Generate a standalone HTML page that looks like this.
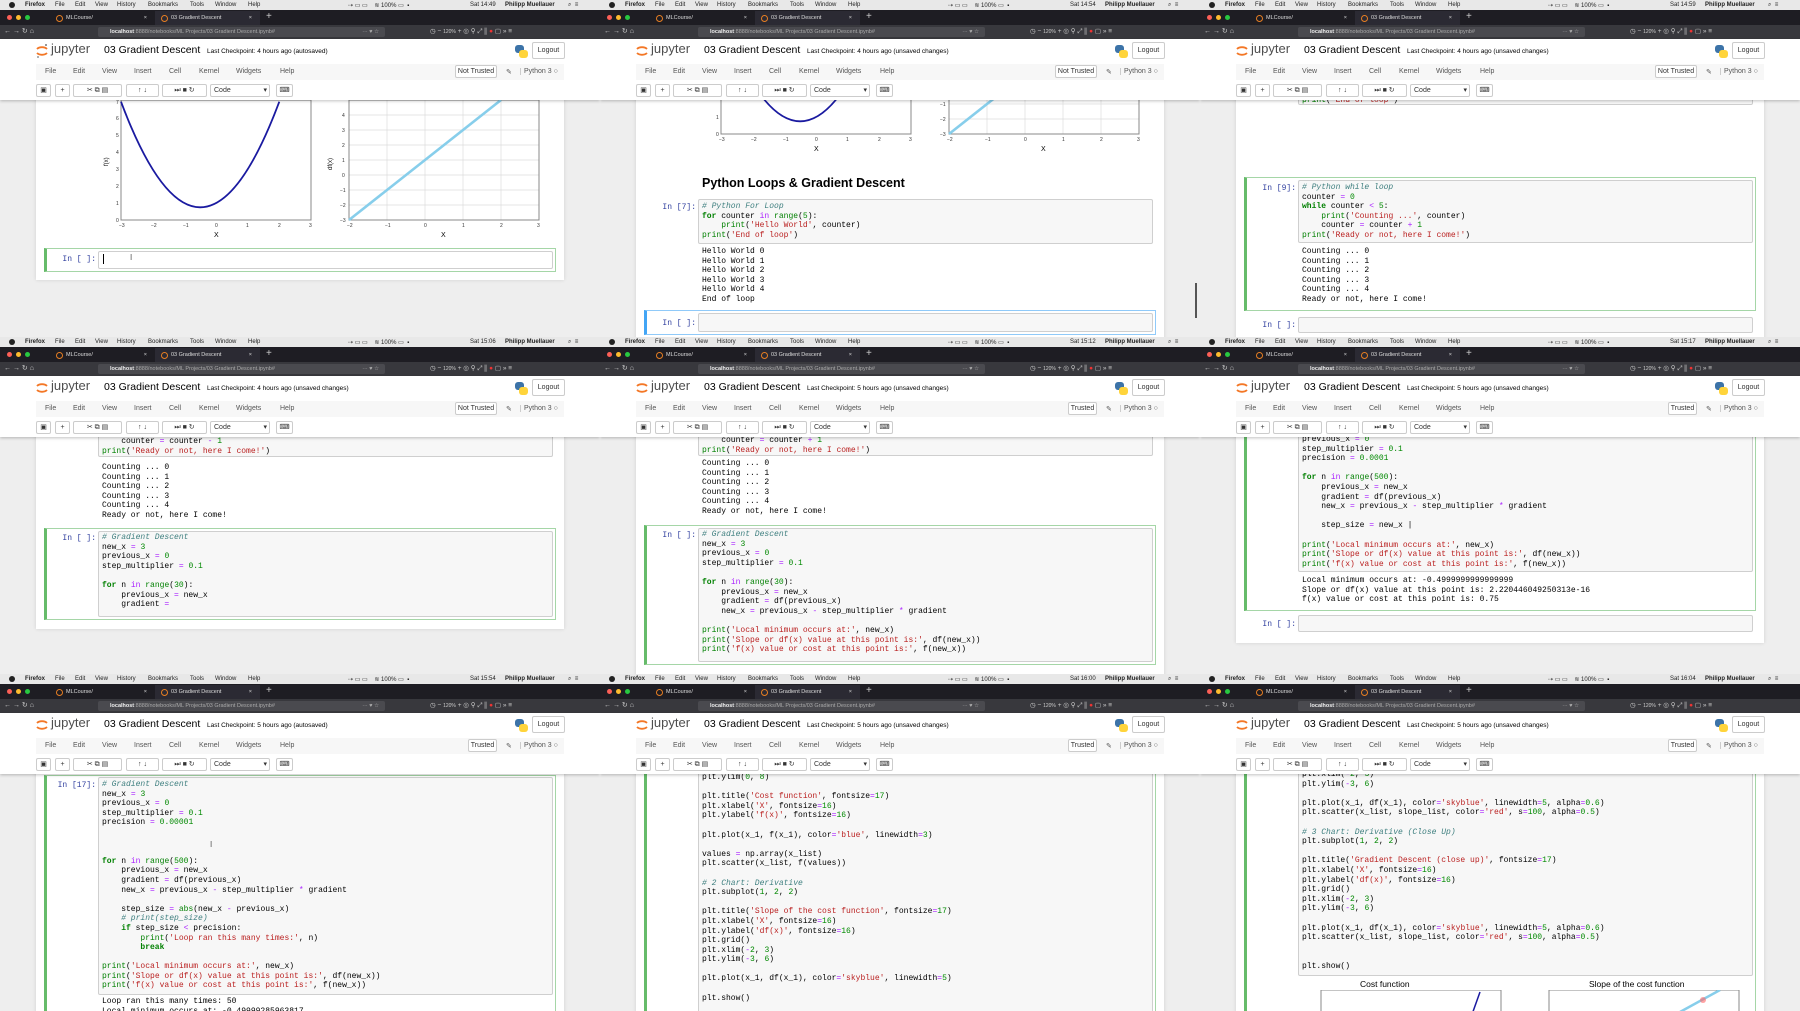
<!DOCTYPE html>
<html><head><meta charset="utf-8">
<style>
*{box-sizing:border-box}
body{margin:0;width:1800px;height:1011px;position:relative;overflow:hidden;background:#eee;font-family:"Liberation Sans",sans-serif}
.p{position:absolute;width:600px;height:337px;overflow:hidden;background:#eeeeee}
.mb{position:absolute;top:0;left:0;width:600px;height:10px;background:#e8e8e8;font-size:6px;color:#222}
.mb i,.ub i,.jh i{position:absolute;font-style:normal;white-space:nowrap}
.mb i{top:1.5px}
.ap{position:absolute;left:9px;top:2px;width:6px;height:6px;border-radius:50%;background:#222}
.tb{position:absolute;top:10px;left:0;width:600px;height:15px;background:#1e1d23}
.dot{position:absolute;top:5px;width:5px;height:5px;border-radius:50%}
.tab{position:absolute;top:1px;height:14px;font-size:5.5px;color:#ddd;padding:4px 0 0 16px;white-space:nowrap}
.tab:before{content:"";position:absolute;left:6px;top:4px;width:5px;height:5px;border:1px solid #e67e22;border-radius:50%}
.ub{position:absolute;top:25px;left:0;width:600px;height:14px;background:#38383d;color:#ccc;font-size:7px}
.uf{position:absolute;left:98px;top:2px;width:287px;height:10px;background:#4a4a4f;border-radius:2px;font-size:5.5px;color:#aaa;padding:2px 0 0 12px;white-space:nowrap}
.uf b{color:#eee}
.jh{position:absolute;top:39px;left:0;width:600px;height:61px;background:#fff;box-shadow:0 1px 3px rgba(0,0,0,.25);z-index:2}
.mn{position:absolute;left:36px;top:25px;width:528px;height:16px;background:#f7f7f7;font-size:7px;color:#555}
.mn i{top:4px}
.bt{position:absolute;top:45px;height:13px;border:1px solid #ccc;background:#fff;border-radius:2px;font-size:7px;text-align:center;color:#333;line-height:11px}
.nb{position:absolute;top:100px;left:0;width:600px;height:237px;overflow:hidden}
.ct{position:absolute;left:36px;width:528px;background:#fff;box-shadow:0 0 4px rgba(0,0,0,.12)}
.cg{position:absolute;left:44px;width:512px;border:1px solid #a5d6a7;border-left:3px solid #66bb6a}
.cb{position:absolute;left:44px;width:512px;border:1px solid #90caf9;border-left:3px solid #42a5f5}
.ia{position:absolute;left:98px;width:455px;background:#f7f7f7;border:1px solid #cfcfcf;border-radius:2px}
.pr{position:absolute;left:40px;width:56px;text-align:right;font:8px "Liberation Mono",monospace;color:#303f9f;white-space:pre}
pre{position:absolute;left:102px;margin:0;font:8px/9.6px "Liberation Mono",monospace;color:#000;white-space:pre}
.k{color:#008000;font-weight:bold}.s{color:#ba2121}.n{color:#080}.c{color:#408080;font-style:italic}.o{color:#aa22ff}.b{color:#008000}
svg text{font-family:"Liberation Sans",sans-serif}
</style></head><body>

<!-- ============ PANEL 1 ============ -->
<div class="p" style="left:0;top:0">
<div class="mb"><b class="ap"></b><i style="left:25px"><b>Firefox</b></i><i style="left:55px">File</i><i style="left:75px">Edit</i><i style="left:95px">View</i><i style="left:117px">History</i><i style="left:148px">Bookmarks</i><i style="left:190px">Tools</i><i style="left:215px">Window</i><i style="left:248px">Help</i><i style="left:348px">⇢ ▭ ▭ &nbsp;&nbsp; ≋ 100% ▭ &nbsp;▪</i><i style="left:470px">Sat 14:49</i><i style="left:505px"><b>Philipp Muellauer</b></i><i style="left:568px">⌕ &nbsp;≡</i></div>
<div class="tb"><b class="dot" style="left:7px;background:#fc5f57"></b><b class="dot" style="left:16px;background:#fdbc2e"></b><b class="dot" style="left:25px;background:#28c840"></b><div class="tab" style="left:50px;width:105px">MLCourse/<span style="position:absolute;right:8px">×</span></div><div class="tab" style="left:155px;width:105px;background:#2b2a33">03 Gradient Descent<span style="position:absolute;right:8px">×</span></div><i style="position:absolute;left:266px;top:1px;color:#ccc;font-size:10px;font-style:normal">+</i></div>
<div class="ub"><i style="left:4px;top:2px">← → ↻ ⌂</i><div class="uf"><b>localhost</b>:8888/notebooks/ML Projects/03 Gradient Descent.ipynb#<span style="position:absolute;right:6px">··· ♥ ☆</span></div><i style="left:430px;top:2px;font-size:6.5px">◷ − <span style="font-size:5px">120%</span> + ◎ ⚲ ⤢ ⫼ <span style="color:#e33">●</span> ▢ » ≡</i></div>
<div class="jh"><svg style="position:absolute;left:35px;top:4px" width="14" height="16"><path d="M2 6 A6 4 0 0 1 12 6" stroke="#f37726" stroke-width="1.8" fill="none"/><path d="M2 10 A6 4 0 0 0 12 10" stroke="#f37726" stroke-width="1.8" fill="none"/><circle cx="11" cy="2" r="1" fill="#767677"/><circle cx="3" cy="14" r="1" fill="#989798"/></svg><i style="left:51px;top:2px;font-size:13px;color:#4e4e4e">jupyter</i><i style="left:104px;top:5px;font-size:10.5px;color:#000">03 Gradient Descent</i><i style="left:207px;top:9px;font-size:6.5px;color:#000">Last Checkpoint: 4 hours ago (autosaved)</i><svg style="position:absolute;left:514px;top:5px" width="15" height="15"><rect x="1" y="1" width="9" height="8" rx="3" fill="#3c73a8"/><rect x="5" y="6" width="9" height="8" rx="3" fill="#ffd43b"/></svg><div class="bt" style="left:532px;top:3px;width:33px;height:17px;line-height:15px">Logout</div>
<div class="mn"><i style="left:9px">File</i><i style="left:37px">Edit</i><i style="left:66px">View</i><i style="left:98px">Insert</i><i style="left:133px">Cell</i><i style="left:163px">Kernel</i><i style="left:200px">Widgets</i><i style="left:244px">Help</i><div class="bt" style="left:419px;top:1px;width:42px">Not Trusted</div><i style="left:470px">✎</i><i style="left:484px;border-left:1px solid #ccc;padding-left:3px">Python 3 ○</i></div>
<div class="bt" style="left:36px;width:15px">▣</div><div class="bt" style="left:55px;width:15px">+</div><div class="bt" style="left:73px;width:49px">✂ ⧉ ▤</div><div class="bt" style="left:126px;width:33px">↑ ↓</div><div class="bt" style="left:162px;width:45px">⏭ ■ ↻</div><div class="bt" style="left:210px;width:60px;text-align:left;padding-left:3px">Code<span style="position:absolute;right:2px">▾</span></div><div class="bt" style="left:276px;width:17px">⌨</div>
</div>
<div class="nb">
<div class="ct" style="top:-10px;height:190px"></div>
<svg style="position:absolute;left:0;top:0" width="600" height="140">
<rect x="121" y="0" width="190" height="120" fill="none" stroke="#888" stroke-width="1"/>
<path d="M121 1.7 Q200.2 212.9 279.3 1.7" stroke="#1a1aa0" stroke-width="1.8" fill="none"/>
<g font-size="5" fill="#333"><text x="116" y="122">0</text><text x="116" y="105">1</text><text x="116" y="88">2</text><text x="116" y="71">3</text><text x="116" y="54">4</text><text x="116" y="37">5</text><text x="116" y="20">6</text><text x="116" y="4">7</text>
<text x="119" y="127">−3</text><text x="151" y="127">−2</text><text x="183" y="127">−1</text><text x="215" y="127">0</text><text x="246" y="127">1</text><text x="278" y="127">2</text><text x="309" y="127">3</text></g>
<text x="214" y="137" font-size="7">X</text><text transform="translate(108,66) rotate(-90)" font-size="6">f(x)</text>
<g stroke="#ddd" stroke-width="0.7"><line x1="387" y1="0" x2="387" y2="120"/><line x1="425" y1="0" x2="425" y2="120"/><line x1="463" y1="0" x2="463" y2="120"/><line x1="501" y1="0" x2="501" y2="120"/>
<line x1="349" y1="15" x2="539" y2="15"/><line x1="349" y1="30" x2="539" y2="30"/><line x1="349" y1="45" x2="539" y2="45"/><line x1="349" y1="60" x2="539" y2="60"/><line x1="349" y1="75" x2="539" y2="75"/><line x1="349" y1="90" x2="539" y2="90"/><line x1="349" y1="105" x2="539" y2="105"/></g>
<rect x="349" y="0" width="190" height="120" fill="none" stroke="#888" stroke-width="1"/>
<line x1="349" y1="120" x2="501" y2="0" stroke="#87ceeb" stroke-width="2.6"/>
<g font-size="5" fill="#333"><text x="342" y="17">4</text><text x="342" y="32">3</text><text x="342" y="47">2</text><text x="342" y="62">1</text><text x="342" y="77">0</text><text x="340" y="92">−1</text><text x="340" y="107">−2</text><text x="340" y="122">−3</text>
<text x="347" y="127">−2</text><text x="385" y="127">−1</text><text x="424" y="127">0</text><text x="462" y="127">1</text><text x="500" y="127">2</text><text x="537" y="127">3</text></g>
<text x="441" y="137" font-size="7">X</text><text transform="translate(332,70) rotate(-90)" font-size="6">df(x)</text>
</svg>
<div class="cg" style="top:148px;height:24px"></div><div class="ia" style="top:151px;height:18px;background:#fff"></div><div class="pr" style="top:155px">In [ ]:</div><div style="position:absolute;left:103px;top:154px;width:1px;height:10px;background:#000"></div><div style="position:absolute;left:130px;top:153px;font-size:8px;color:#555">I</div>
</div>
</div>

<!-- ============ PANEL 2 ============ -->
<div class="p" style="left:600px;top:0">
<div class="mb"><b class="ap"></b><i style="left:25px"><b>Firefox</b></i><i style="left:55px">File</i><i style="left:75px">Edit</i><i style="left:95px">View</i><i style="left:117px">History</i><i style="left:148px">Bookmarks</i><i style="left:190px">Tools</i><i style="left:215px">Window</i><i style="left:248px">Help</i><i style="left:348px">⇢ ▭ ▭ &nbsp;&nbsp; ≋ 100% ▭ &nbsp;▪</i><i style="left:470px">Sat 14:54</i><i style="left:505px"><b>Philipp Muellauer</b></i><i style="left:568px">⌕ &nbsp;≡</i></div>
<div class="tb"><b class="dot" style="left:7px;background:#fc5f57"></b><b class="dot" style="left:16px;background:#fdbc2e"></b><b class="dot" style="left:25px;background:#28c840"></b><div class="tab" style="left:50px;width:105px">MLCourse/<span style="position:absolute;right:8px">×</span></div><div class="tab" style="left:155px;width:105px;background:#2b2a33">03 Gradient Descent<span style="position:absolute;right:8px">×</span></div><i style="position:absolute;left:266px;top:1px;color:#ccc;font-size:10px;font-style:normal">+</i></div>
<div class="ub"><i style="left:4px;top:2px">← → ↻ ⌂</i><div class="uf"><b>localhost</b>:8888/notebooks/ML Projects/03 Gradient Descent.ipynb#<span style="position:absolute;right:6px">··· ♥ ☆</span></div><i style="left:430px;top:2px;font-size:6.5px">◷ − <span style="font-size:5px">120%</span> + ◎ ⚲ ⤢ ⫼ <span style="color:#e33">●</span> ▢ » ≡</i></div>
<div class="jh"><svg style="position:absolute;left:35px;top:4px" width="14" height="16"><path d="M2 6 A6 4 0 0 1 12 6" stroke="#f37726" stroke-width="1.8" fill="none"/><path d="M2 10 A6 4 0 0 0 12 10" stroke="#f37726" stroke-width="1.8" fill="none"/></svg><i style="left:51px;top:2px;font-size:13px;color:#4e4e4e">jupyter</i><i style="left:104px;top:5px;font-size:10.5px;color:#000">03 Gradient Descent</i><i style="left:207px;top:9px;font-size:6.5px;color:#000">Last Checkpoint: 4 hours ago (unsaved changes)</i><svg style="position:absolute;left:514px;top:5px" width="15" height="15"><rect x="1" y="1" width="9" height="8" rx="3" fill="#3c73a8"/><rect x="5" y="6" width="9" height="8" rx="3" fill="#ffd43b"/></svg><div class="bt" style="left:532px;top:3px;width:33px;height:17px;line-height:15px">Logout</div>
<div class="mn"><i style="left:9px">File</i><i style="left:37px">Edit</i><i style="left:66px">View</i><i style="left:98px">Insert</i><i style="left:133px">Cell</i><i style="left:163px">Kernel</i><i style="left:200px">Widgets</i><i style="left:244px">Help</i><div class="bt" style="left:419px;top:1px;width:42px">Not Trusted</div><i style="left:470px">✎</i><i style="left:484px;border-left:1px solid #ccc;padding-left:3px">Python 3 ○</i></div>
<div class="bt" style="left:36px;width:15px">▣</div><div class="bt" style="left:55px;width:15px">+</div><div class="bt" style="left:73px;width:49px">✂ ⧉ ▤</div><div class="bt" style="left:126px;width:33px">↑ ↓</div><div class="bt" style="left:162px;width:45px">⏭ ■ ↻</div><div class="bt" style="left:210px;width:60px;text-align:left;padding-left:3px">Code<span style="position:absolute;right:2px">▾</span></div><div class="bt" style="left:276px;width:17px">⌨</div>
</div>
<div class="nb">
<div class="ct" style="top:-10px;height:260px"></div>
<svg style="position:absolute;left:0;top:-86px" width="600" height="140">
<rect x="121" y="0" width="190" height="120" fill="none" stroke="#888" stroke-width="1"/>
<path d="M121 1.7 Q200.2 212.9 279.3 1.7" stroke="#1a1aa0" stroke-width="1.8" fill="none"/>
<g font-size="5" fill="#333"><text x="116" y="122">0</text><text x="116" y="105">1</text><text x="119" y="127">−3</text><text x="151" y="127">−2</text><text x="183" y="127">−1</text><text x="215" y="127">0</text><text x="246" y="127">1</text><text x="278" y="127">2</text><text x="309" y="127">3</text></g>
<text x="214" y="137" font-size="7">X</text>
<g stroke="#ddd" stroke-width="0.7"><line x1="387" y1="0" x2="387" y2="120"/><line x1="425" y1="0" x2="425" y2="120"/><line x1="463" y1="0" x2="463" y2="120"/><line x1="501" y1="0" x2="501" y2="120"/><line x1="349" y1="90" x2="539" y2="90"/><line x1="349" y1="105" x2="539" y2="105"/></g>
<rect x="349" y="0" width="190" height="120" fill="none" stroke="#888" stroke-width="1"/>
<line x1="349" y1="120" x2="501" y2="0" stroke="#87ceeb" stroke-width="2.6"/>
<g font-size="5" fill="#333"><text x="340" y="92">−1</text><text x="340" y="107">−2</text><text x="340" y="122">−3</text><text x="347" y="127">−2</text><text x="385" y="127">−1</text><text x="424" y="127">0</text><text x="462" y="127">1</text><text x="500" y="127">2</text><text x="537" y="127">3</text></g>
<text x="441" y="137" font-size="7">X</text>
</svg>
<div style="position:absolute;left:102px;top:76px;font-size:12.5px;font-weight:bold;color:#000">Python Loops &amp; Gradient Descent</div>
<div class="ia" style="top:99px;height:45px"></div><div class="pr" style="top:103px">In [7]:</div>
<pre style="top:102px"><span class="c"># Python For Loop</span>
<span class="k">for</span> counter <span class="o">in</span> <span class="b">range</span>(<span class="n">5</span>):
    <span class="b">print</span>(<span class="s">'Hello World'</span>, counter)
<span class="b">print</span>(<span class="s">'End of loop'</span>)</pre>
<pre style="top:147px">Hello World 0
Hello World 1
Hello World 2
Hello World 3
Hello World 4
End of loop</pre>
<div class="cb" style="top:210px;height:25px"></div><div class="ia" style="top:213px;height:19px"></div><div class="pr" style="top:219px">In [ ]:</div>
</div>
<div style="position:absolute;left:595px;top:283px;width:2px;height:35px;background:#555"></div>
</div>

<!-- ============ PANEL 3 ============ -->
<div class="p" style="left:1200px;top:0">
<div class="mb"><b class="ap"></b><i style="left:25px"><b>Firefox</b></i><i style="left:55px">File</i><i style="left:75px">Edit</i><i style="left:95px">View</i><i style="left:117px">History</i><i style="left:148px">Bookmarks</i><i style="left:190px">Tools</i><i style="left:215px">Window</i><i style="left:248px">Help</i><i style="left:348px">⇢ ▭ ▭ &nbsp;&nbsp; ≋ 100% ▭ &nbsp;▪</i><i style="left:470px">Sat 14:59</i><i style="left:505px"><b>Philipp Muellauer</b></i><i style="left:568px">⌕ &nbsp;≡</i></div>
<div class="tb"><b class="dot" style="left:7px;background:#fc5f57"></b><b class="dot" style="left:16px;background:#fdbc2e"></b><b class="dot" style="left:25px;background:#28c840"></b><div class="tab" style="left:50px;width:105px">MLCourse/<span style="position:absolute;right:8px">×</span></div><div class="tab" style="left:155px;width:105px;background:#2b2a33">03 Gradient Descent<span style="position:absolute;right:8px">×</span></div><i style="position:absolute;left:266px;top:1px;color:#ccc;font-size:10px;font-style:normal">+</i></div>
<div class="ub"><i style="left:4px;top:2px">← → ↻ ⌂</i><div class="uf"><b>localhost</b>:8888/notebooks/ML Projects/03 Gradient Descent.ipynb#<span style="position:absolute;right:6px">··· ♥ ☆</span></div><i style="left:430px;top:2px;font-size:6.5px">◷ − <span style="font-size:5px">120%</span> + ◎ ⚲ ⤢ ⫼ <span style="color:#e33">●</span> ▢ » ≡</i></div>
<div class="jh"><svg style="position:absolute;left:35px;top:4px" width="14" height="16"><path d="M2 6 A6 4 0 0 1 12 6" stroke="#f37726" stroke-width="1.8" fill="none"/><path d="M2 10 A6 4 0 0 0 12 10" stroke="#f37726" stroke-width="1.8" fill="none"/></svg><i style="left:51px;top:2px;font-size:13px;color:#4e4e4e">jupyter</i><i style="left:104px;top:5px;font-size:10.5px;color:#000">03 Gradient Descent</i><i style="left:207px;top:9px;font-size:6.5px;color:#000">Last Checkpoint: 4 hours ago (unsaved changes)</i><svg style="position:absolute;left:514px;top:5px" width="15" height="15"><rect x="1" y="1" width="9" height="8" rx="3" fill="#3c73a8"/><rect x="5" y="6" width="9" height="8" rx="3" fill="#ffd43b"/></svg><div class="bt" style="left:532px;top:3px;width:33px;height:17px;line-height:15px">Logout</div>
<div class="mn"><i style="left:9px">File</i><i style="left:37px">Edit</i><i style="left:66px">View</i><i style="left:98px">Insert</i><i style="left:133px">Cell</i><i style="left:163px">Kernel</i><i style="left:200px">Widgets</i><i style="left:244px">Help</i><div class="bt" style="left:419px;top:1px;width:42px">Not Trusted</div><i style="left:470px">✎</i><i style="left:484px;border-left:1px solid #ccc;padding-left:3px">Python 3 ○</i></div>
<div class="bt" style="left:36px;width:15px">▣</div><div class="bt" style="left:55px;width:15px">+</div><div class="bt" style="left:73px;width:49px">✂ ⧉ ▤</div><div class="bt" style="left:126px;width:33px">↑ ↓</div><div class="bt" style="left:162px;width:45px">⏭ ■ ↻</div><div class="bt" style="left:210px;width:60px;text-align:left;padding-left:3px">Code<span style="position:absolute;right:2px">▾</span></div><div class="bt" style="left:276px;width:17px">⌨</div>
</div>
<div class="nb">
<div class="ct" style="top:-10px;height:260px"></div>
<div class="ia" style="top:-10px;height:15px"></div>
<pre style="top:-4px"><span class="b">print</span>(<span class="s">'End of loop'</span>)</pre>
<div class="cg" style="top:77px;height:134px"></div><div class="ia" style="top:80px;height:63px"></div><div class="pr" style="top:84px">In [9]:</div>
<pre style="top:83px"><span class="c"># Python while loop</span>
counter <span class="o">=</span> <span class="n">0</span>
<span class="k">while</span> counter <span class="o">&lt;</span> <span class="n">5</span>:
    <span class="b">print</span>(<span class="s">'Counting ...'</span>, counter)
    counter <span class="o">=</span> counter <span class="o">+</span> <span class="n">1</span>
<span class="b">print</span>(<span class="s">'Ready or not, here I come!'</span>)</pre>
<pre style="top:147px">Counting ... 0
Counting ... 1
Counting ... 2
Counting ... 3
Counting ... 4
Ready or not, here I come!</pre>
<div class="ia" style="top:217px;height:16px"></div><div class="pr" style="top:221px">In [ ]:</div>
</div>
</div>

<!-- ============ PANEL 4 ============ -->
<div class="p" style="left:0;top:337px">
<div class="mb"><b class="ap"></b><i style="left:25px"><b>Firefox</b></i><i style="left:55px">File</i><i style="left:75px">Edit</i><i style="left:95px">View</i><i style="left:117px">History</i><i style="left:148px">Bookmarks</i><i style="left:190px">Tools</i><i style="left:215px">Window</i><i style="left:248px">Help</i><i style="left:348px">⇢ ▭ ▭ &nbsp;&nbsp; ≋ 100% ▭ &nbsp;▪</i><i style="left:470px">Sat 15:06</i><i style="left:505px"><b>Philipp Muellauer</b></i><i style="left:568px">⌕ &nbsp;≡</i></div>
<div class="tb"><b class="dot" style="left:7px;background:#fc5f57"></b><b class="dot" style="left:16px;background:#fdbc2e"></b><b class="dot" style="left:25px;background:#28c840"></b><div class="tab" style="left:50px;width:105px">MLCourse/<span style="position:absolute;right:8px">×</span></div><div class="tab" style="left:155px;width:105px;background:#2b2a33">03 Gradient Descent<span style="position:absolute;right:8px">×</span></div><i style="position:absolute;left:266px;top:1px;color:#ccc;font-size:10px;font-style:normal">+</i></div>
<div class="ub"><i style="left:4px;top:2px">← → ↻ ⌂</i><div class="uf"><b>localhost</b>:8888/notebooks/ML Projects/03 Gradient Descent.ipynb#<span style="position:absolute;right:6px">··· ♥ ☆</span></div><i style="left:430px;top:2px;font-size:6.5px">◷ − <span style="font-size:5px">120%</span> + ◎ ⚲ ⤢ ⫼ <span style="color:#e33">●</span> ▢ » ≡</i></div>
<div class="jh"><svg style="position:absolute;left:35px;top:4px" width="14" height="16"><path d="M2 6 A6 4 0 0 1 12 6" stroke="#f37726" stroke-width="1.8" fill="none"/><path d="M2 10 A6 4 0 0 0 12 10" stroke="#f37726" stroke-width="1.8" fill="none"/></svg><i style="left:51px;top:2px;font-size:13px;color:#4e4e4e">jupyter</i><i style="left:104px;top:5px;font-size:10.5px;color:#000">03 Gradient Descent</i><i style="left:207px;top:9px;font-size:6.5px;color:#000">Last Checkpoint: 4 hours ago (unsaved changes)</i><svg style="position:absolute;left:514px;top:5px" width="15" height="15"><rect x="1" y="1" width="9" height="8" rx="3" fill="#3c73a8"/><rect x="5" y="6" width="9" height="8" rx="3" fill="#ffd43b"/></svg><div class="bt" style="left:532px;top:3px;width:33px;height:17px;line-height:15px">Logout</div>
<div class="mn"><i style="left:9px">File</i><i style="left:37px">Edit</i><i style="left:66px">View</i><i style="left:98px">Insert</i><i style="left:133px">Cell</i><i style="left:163px">Kernel</i><i style="left:200px">Widgets</i><i style="left:244px">Help</i><div class="bt" style="left:419px;top:1px;width:42px">Not Trusted</div><i style="left:470px">✎</i><i style="left:484px;border-left:1px solid #ccc;padding-left:3px">Python 3 ○</i></div>
<div class="bt" style="left:36px;width:15px">▣</div><div class="bt" style="left:55px;width:15px">+</div><div class="bt" style="left:73px;width:49px">✂ ⧉ ▤</div><div class="bt" style="left:126px;width:33px">↑ ↓</div><div class="bt" style="left:162px;width:45px">⏭ ■ ↻</div><div class="bt" style="left:210px;width:60px;text-align:left;padding-left:3px">Code<span style="position:absolute;right:2px">▾</span></div><div class="bt" style="left:276px;width:17px">⌨</div>
</div>
<div class="nb">
<div class="ct" style="top:-10px;height:202px"></div>
<div class="ia" style="top:-10px;height:30px"></div>
<pre style="top:0px">    counter <span class="o">=</span> counter <span class="o">-</span> <span class="n">1</span>
<span class="b">print</span>(<span class="s">'Ready or not, here I come!'</span>)</pre>
<pre style="top:26px">Counting ... 0
Counting ... 1
Counting ... 2
Counting ... 3
Counting ... 4
Ready or not, here I come!</pre>
<div class="cg" style="top:91px;height:92px"></div><div class="ia" style="top:94px;height:86px"></div><div class="pr" style="top:97px">In [ ]:</div>
<pre style="top:96px"><span class="c"># Gradient Descent</span>
new_x <span class="o">=</span> <span class="n">3</span>
previous_x <span class="o">=</span> <span class="n">0</span>
step_multiplier <span class="o">=</span> <span class="n">0.1</span>

<span class="k">for</span> n <span class="o">in</span> <span class="b">range</span>(<span class="n">30</span>):
    previous_x <span class="o">=</span> new_x
    gradient <span class="o">=</span> </pre>
</div>
</div>

<!-- ============ PANEL 5 ============ -->
<div class="p" style="left:600px;top:337px">
<div class="mb"><b class="ap"></b><i style="left:25px"><b>Firefox</b></i><i style="left:55px">File</i><i style="left:75px">Edit</i><i style="left:95px">View</i><i style="left:117px">History</i><i style="left:148px">Bookmarks</i><i style="left:190px">Tools</i><i style="left:215px">Window</i><i style="left:248px">Help</i><i style="left:348px">⇢ ▭ ▭ &nbsp;&nbsp; ≋ 100% ▭ &nbsp;▪</i><i style="left:470px">Sat 15:12</i><i style="left:505px"><b>Philipp Muellauer</b></i><i style="left:568px">⌕ &nbsp;≡</i></div>
<div class="tb"><b class="dot" style="left:7px;background:#fc5f57"></b><b class="dot" style="left:16px;background:#fdbc2e"></b><b class="dot" style="left:25px;background:#28c840"></b><div class="tab" style="left:50px;width:105px">MLCourse/<span style="position:absolute;right:8px">×</span></div><div class="tab" style="left:155px;width:105px;background:#2b2a33">03 Gradient Descent<span style="position:absolute;right:8px">×</span></div><i style="position:absolute;left:266px;top:1px;color:#ccc;font-size:10px;font-style:normal">+</i></div>
<div class="ub"><i style="left:4px;top:2px">← → ↻ ⌂</i><div class="uf"><b>localhost</b>:8888/notebooks/ML Projects/03 Gradient Descent.ipynb#<span style="position:absolute;right:6px">··· ♥ ☆</span></div><i style="left:430px;top:2px;font-size:6.5px">◷ − <span style="font-size:5px">120%</span> + ◎ ⚲ ⤢ ⫼ <span style="color:#e33">●</span> ▢ » ≡</i></div>
<div class="jh"><svg style="position:absolute;left:35px;top:4px" width="14" height="16"><path d="M2 6 A6 4 0 0 1 12 6" stroke="#f37726" stroke-width="1.8" fill="none"/><path d="M2 10 A6 4 0 0 0 12 10" stroke="#f37726" stroke-width="1.8" fill="none"/></svg><i style="left:51px;top:2px;font-size:13px;color:#4e4e4e">jupyter</i><i style="left:104px;top:5px;font-size:10.5px;color:#000">03 Gradient Descent</i><i style="left:207px;top:9px;font-size:6.5px;color:#000">Last Checkpoint: 5 hours ago (unsaved changes)</i><svg style="position:absolute;left:514px;top:5px" width="15" height="15"><rect x="1" y="1" width="9" height="8" rx="3" fill="#3c73a8"/><rect x="5" y="6" width="9" height="8" rx="3" fill="#ffd43b"/></svg><div class="bt" style="left:532px;top:3px;width:33px;height:17px;line-height:15px">Logout</div>
<div class="mn"><i style="left:9px">File</i><i style="left:37px">Edit</i><i style="left:66px">View</i><i style="left:98px">Insert</i><i style="left:133px">Cell</i><i style="left:163px">Kernel</i><i style="left:200px">Widgets</i><i style="left:244px">Help</i><div class="bt" style="left:432px;top:1px;width:29px">Trusted</div><i style="left:470px">✎</i><i style="left:484px;border-left:1px solid #ccc;padding-left:3px">Python 3 ○</i></div>
<div class="bt" style="left:36px;width:15px">▣</div><div class="bt" style="left:55px;width:15px">+</div><div class="bt" style="left:73px;width:49px">✂ ⧉ ▤</div><div class="bt" style="left:126px;width:33px">↑ ↓</div><div class="bt" style="left:162px;width:45px">⏭ ■ ↻</div><div class="bt" style="left:210px;width:60px;text-align:left;padding-left:3px">Code<span style="position:absolute;right:2px">▾</span></div><div class="bt" style="left:276px;width:17px">⌨</div>
</div>
<div class="nb">
<div class="ct" style="top:-10px;height:260px"></div>
<div class="ia" style="top:-10px;height:29px"></div>
<pre style="top:-1px">    counter <span class="o">=</span> counter <span class="o">+</span> <span class="n">1</span>
<span class="b">print</span>(<span class="s">'Ready or not, here I come!'</span>)</pre>
<pre style="top:22px">Counting ... 0
Counting ... 1
Counting ... 2
Counting ... 3
Counting ... 4
Ready or not, here I come!</pre>
<div class="cg" style="top:88px;height:140px"></div><div class="ia" style="top:91px;height:134px"></div><div class="pr" style="top:94px">In [ ]:</div>
<pre style="top:93px"><span class="c"># Gradient Descent</span>
new_x <span class="o">=</span> <span class="n">3</span>
previous_x <span class="o">=</span> <span class="n">0</span>
step_multiplier <span class="o">=</span> <span class="n">0.1</span>

<span class="k">for</span> n <span class="o">in</span> <span class="b">range</span>(<span class="n">30</span>):
    previous_x <span class="o">=</span> new_x
    gradient <span class="o">=</span> df(previous_x)
    new_x <span class="o">=</span> previous_x <span class="o">-</span> step_multiplier <span class="o">*</span> gradient

<span class="b">print</span>(<span class="s">'Local minimum occurs at:'</span>, new_x)
<span class="b">print</span>(<span class="s">'Slope or df(x) value at this point is:'</span>, df(new_x))
<span class="b">print</span>(<span class="s">'f(x) value or cost at this point is:'</span>, f(new_x))</pre>
</div>
</div>

<!-- ============ PANEL 6 ============ -->
<div class="p" style="left:1200px;top:337px">
<div class="mb"><b class="ap"></b><i style="left:25px"><b>Firefox</b></i><i style="left:55px">File</i><i style="left:75px">Edit</i><i style="left:95px">View</i><i style="left:117px">History</i><i style="left:148px">Bookmarks</i><i style="left:190px">Tools</i><i style="left:215px">Window</i><i style="left:248px">Help</i><i style="left:348px">⇢ ▭ ▭ &nbsp;&nbsp; ≋ 100% ▭ &nbsp;▪</i><i style="left:470px">Sat 15:17</i><i style="left:505px"><b>Philipp Muellauer</b></i><i style="left:568px">⌕ &nbsp;≡</i></div>
<div class="tb"><b class="dot" style="left:7px;background:#fc5f57"></b><b class="dot" style="left:16px;background:#fdbc2e"></b><b class="dot" style="left:25px;background:#28c840"></b><div class="tab" style="left:50px;width:105px">MLCourse/<span style="position:absolute;right:8px">×</span></div><div class="tab" style="left:155px;width:105px;background:#2b2a33">03 Gradient Descent<span style="position:absolute;right:8px">×</span></div><i style="position:absolute;left:266px;top:1px;color:#ccc;font-size:10px;font-style:normal">+</i></div>
<div class="ub"><i style="left:4px;top:2px">← → ↻ ⌂</i><div class="uf"><b>localhost</b>:8888/notebooks/ML Projects/03 Gradient Descent.ipynb#<span style="position:absolute;right:6px">··· ♥ ☆</span></div><i style="left:430px;top:2px;font-size:6.5px">◷ − <span style="font-size:5px">120%</span> + ◎ ⚲ ⤢ ⫼ <span style="color:#e33">●</span> ▢ » ≡</i></div>
<div class="jh"><svg style="position:absolute;left:35px;top:4px" width="14" height="16"><path d="M2 6 A6 4 0 0 1 12 6" stroke="#f37726" stroke-width="1.8" fill="none"/><path d="M2 10 A6 4 0 0 0 12 10" stroke="#f37726" stroke-width="1.8" fill="none"/></svg><i style="left:51px;top:2px;font-size:13px;color:#4e4e4e">jupyter</i><i style="left:104px;top:5px;font-size:10.5px;color:#000">03 Gradient Descent</i><i style="left:207px;top:9px;font-size:6.5px;color:#000">Last Checkpoint: 5 hours ago (unsaved changes)</i><svg style="position:absolute;left:514px;top:5px" width="15" height="15"><rect x="1" y="1" width="9" height="8" rx="3" fill="#3c73a8"/><rect x="5" y="6" width="9" height="8" rx="3" fill="#ffd43b"/></svg><div class="bt" style="left:532px;top:3px;width:33px;height:17px;line-height:15px">Logout</div>
<div class="mn"><i style="left:9px">File</i><i style="left:37px">Edit</i><i style="left:66px">View</i><i style="left:98px">Insert</i><i style="left:133px">Cell</i><i style="left:163px">Kernel</i><i style="left:200px">Widgets</i><i style="left:244px">Help</i><div class="bt" style="left:432px;top:1px;width:29px">Trusted</div><i style="left:470px">✎</i><i style="left:484px;border-left:1px solid #ccc;padding-left:3px">Python 3 ○</i></div>
<div class="bt" style="left:36px;width:15px">▣</div><div class="bt" style="left:55px;width:15px">+</div><div class="bt" style="left:73px;width:49px">✂ ⧉ ▤</div><div class="bt" style="left:126px;width:33px">↑ ↓</div><div class="bt" style="left:162px;width:45px">⏭ ■ ↻</div><div class="bt" style="left:210px;width:60px;text-align:left;padding-left:3px">Code<span style="position:absolute;right:2px">▾</span></div><div class="bt" style="left:276px;width:17px">⌨</div>
</div>
<div class="nb">
<div class="ct" style="top:-10px;height:216px"></div>
<div class="cg" style="top:-10px;height:184px"></div><div class="ia" style="top:-10px;height:145px"></div>
<pre style="top:-2px">previous_x <span class="o">=</span> <span class="n">0</span>
step_multiplier <span class="o">=</span> <span class="n">0.1</span>
precision <span class="o">=</span> <span class="n">0.0001</span>

<span class="k">for</span> n <span class="o">in</span> <span class="b">range</span>(<span class="n">500</span>):
    previous_x <span class="o">=</span> new_x
    gradient <span class="o">=</span> df(previous_x)
    new_x <span class="o">=</span> previous_x <span class="o">-</span> step_multiplier <span class="o">*</span> gradient

    step_size <span class="o">=</span> new_x |

<span class="b">print</span>(<span class="s">'Local minimum occurs at:'</span>, new_x)
<span class="b">print</span>(<span class="s">'Slope or df(x) value at this point is:'</span>, df(new_x))
<span class="b">print</span>(<span class="s">'f(x) value or cost at this point is:'</span>, f(new_x))</pre>
<pre style="top:139px">Local minimum occurs at: -0.4999999999999999
Slope or df(x) value at this point is: 2.220446049250313e-16
f(x) value or cost at this point is: 0.75</pre>
<div class="ia" style="top:178px;height:17px"></div><div class="pr" style="top:183px">In [ ]:</div>
</div>
</div>

<!-- ============ PANEL 7 ============ -->
<div class="p" style="left:0;top:674px">
<div class="mb"><b class="ap"></b><i style="left:25px"><b>Firefox</b></i><i style="left:55px">File</i><i style="left:75px">Edit</i><i style="left:95px">View</i><i style="left:117px">History</i><i style="left:148px">Bookmarks</i><i style="left:190px">Tools</i><i style="left:215px">Window</i><i style="left:248px">Help</i><i style="left:348px">⇢ ▭ ▭ &nbsp;&nbsp; ≋ 100% ▭ &nbsp;▪</i><i style="left:470px">Sat 15:54</i><i style="left:505px"><b>Philipp Muellauer</b></i><i style="left:568px">⌕ &nbsp;≡</i></div>
<div class="tb"><b class="dot" style="left:7px;background:#fc5f57"></b><b class="dot" style="left:16px;background:#fdbc2e"></b><b class="dot" style="left:25px;background:#28c840"></b><div class="tab" style="left:50px;width:105px">MLCourse/<span style="position:absolute;right:8px">×</span></div><div class="tab" style="left:155px;width:105px;background:#2b2a33">03 Gradient Descent<span style="position:absolute;right:8px">×</span></div><i style="position:absolute;left:266px;top:1px;color:#ccc;font-size:10px;font-style:normal">+</i></div>
<div class="ub"><i style="left:4px;top:2px">← → ↻ ⌂</i><div class="uf"><b>localhost</b>:8888/notebooks/ML Projects/03 Gradient Descent.ipynb#<span style="position:absolute;right:6px">··· ♥ ☆</span></div><i style="left:430px;top:2px;font-size:6.5px">◷ − <span style="font-size:5px">120%</span> + ◎ ⚲ ⤢ ⫼ <span style="color:#e33">●</span> ▢ » ≡</i></div>
<div class="jh"><svg style="position:absolute;left:35px;top:4px" width="14" height="16"><path d="M2 6 A6 4 0 0 1 12 6" stroke="#f37726" stroke-width="1.8" fill="none"/><path d="M2 10 A6 4 0 0 0 12 10" stroke="#f37726" stroke-width="1.8" fill="none"/></svg><i style="left:51px;top:2px;font-size:13px;color:#4e4e4e">jupyter</i><i style="left:104px;top:5px;font-size:10.5px;color:#000">03 Gradient Descent</i><i style="left:207px;top:9px;font-size:6.5px;color:#000">Last Checkpoint: 5 hours ago (autosaved)</i><svg style="position:absolute;left:514px;top:5px" width="15" height="15"><rect x="1" y="1" width="9" height="8" rx="3" fill="#3c73a8"/><rect x="5" y="6" width="9" height="8" rx="3" fill="#ffd43b"/></svg><div class="bt" style="left:532px;top:3px;width:33px;height:17px;line-height:15px">Logout</div>
<div class="mn"><i style="left:9px">File</i><i style="left:37px">Edit</i><i style="left:66px">View</i><i style="left:98px">Insert</i><i style="left:133px">Cell</i><i style="left:163px">Kernel</i><i style="left:200px">Widgets</i><i style="left:244px">Help</i><div class="bt" style="left:432px;top:1px;width:29px">Trusted</div><i style="left:470px">✎</i><i style="left:484px;border-left:1px solid #ccc;padding-left:3px">Python 3 ○</i></div>
<div class="bt" style="left:36px;width:15px">▣</div><div class="bt" style="left:55px;width:15px">+</div><div class="bt" style="left:73px;width:49px">✂ ⧉ ▤</div><div class="bt" style="left:126px;width:33px">↑ ↓</div><div class="bt" style="left:162px;width:45px">⏭ ■ ↻</div><div class="bt" style="left:210px;width:60px;text-align:left;padding-left:3px">Code<span style="position:absolute;right:2px">▾</span></div><div class="bt" style="left:276px;width:17px">⌨</div>
</div>
<div class="nb">
<div class="ct" style="top:-10px;height:260px"></div>
<div class="cg" style="top:1px;height:250px"></div><div class="ia" style="top:3px;height:218px"></div><div class="pr" style="top:7px">In [17]:</div>
<pre style="top:6px"><span class="c"># Gradient Descent</span>
new_x <span class="o">=</span> <span class="n">3</span>
previous_x <span class="o">=</span> <span class="n">0</span>
step_multiplier <span class="o">=</span> <span class="n">0.1</span>
precision <span class="o">=</span> <span class="n">0.00001</span>



<span class="k">for</span> n <span class="o">in</span> <span class="b">range</span>(<span class="n">500</span>):
    previous_x <span class="o">=</span> new_x
    gradient <span class="o">=</span> df(previous_x)
    new_x <span class="o">=</span> previous_x <span class="o">-</span> step_multiplier <span class="o">*</span> gradient

    step_size <span class="o">=</span> <span class="b">abs</span>(new_x <span class="o">-</span> previous_x)
    <span class="c"># print(step_size)</span>
    <span class="k">if</span> step_size <span class="o">&lt;</span> precision:
        <span class="b">print</span>(<span class="s">'Loop ran this many times:'</span>, n)
        <span class="k">break</span>

<span class="b">print</span>(<span class="s">'Local minimum occurs at:'</span>, new_x)
<span class="b">print</span>(<span class="s">'Slope or df(x) value at this point is:'</span>, df(new_x))
<span class="b">print</span>(<span class="s">'f(x) value or cost at this point is:'</span>, f(new_x))</pre>
<pre style="top:223px">Loop ran this many times: 50
Local minimum occurs at: -0.49999285963817</pre>
<div style="position:absolute;left:210px;top:66px;font-size:8px;color:#555">I</div>
</div>
</div>

<!-- ============ PANEL 8 ============ -->
<div class="p" style="left:600px;top:674px">
<div class="mb"><b class="ap"></b><i style="left:25px"><b>Firefox</b></i><i style="left:55px">File</i><i style="left:75px">Edit</i><i style="left:95px">View</i><i style="left:117px">History</i><i style="left:148px">Bookmarks</i><i style="left:190px">Tools</i><i style="left:215px">Window</i><i style="left:248px">Help</i><i style="left:348px">⇢ ▭ ▭ &nbsp;&nbsp; ≋ 100% ▭ &nbsp;▪</i><i style="left:470px">Sat 16:00</i><i style="left:505px"><b>Philipp Muellauer</b></i><i style="left:568px">⌕ &nbsp;≡</i></div>
<div class="tb"><b class="dot" style="left:7px;background:#fc5f57"></b><b class="dot" style="left:16px;background:#fdbc2e"></b><b class="dot" style="left:25px;background:#28c840"></b><div class="tab" style="left:50px;width:105px">MLCourse/<span style="position:absolute;right:8px">×</span></div><div class="tab" style="left:155px;width:105px;background:#2b2a33">03 Gradient Descent<span style="position:absolute;right:8px">×</span></div><i style="position:absolute;left:266px;top:1px;color:#ccc;font-size:10px;font-style:normal">+</i></div>
<div class="ub"><i style="left:4px;top:2px">← → ↻ ⌂</i><div class="uf"><b>localhost</b>:8888/notebooks/ML Projects/03 Gradient Descent.ipynb#<span style="position:absolute;right:6px">··· ♥ ☆</span></div><i style="left:430px;top:2px;font-size:6.5px">◷ − <span style="font-size:5px">120%</span> + ◎ ⚲ ⤢ ⫼ <span style="color:#e33">●</span> ▢ » ≡</i></div>
<div class="jh"><svg style="position:absolute;left:35px;top:4px" width="14" height="16"><path d="M2 6 A6 4 0 0 1 12 6" stroke="#f37726" stroke-width="1.8" fill="none"/><path d="M2 10 A6 4 0 0 0 12 10" stroke="#f37726" stroke-width="1.8" fill="none"/></svg><i style="left:51px;top:2px;font-size:13px;color:#4e4e4e">jupyter</i><i style="left:104px;top:5px;font-size:10.5px;color:#000">03 Gradient Descent</i><i style="left:207px;top:9px;font-size:6.5px;color:#000">Last Checkpoint: 5 hours ago (unsaved changes)</i><svg style="position:absolute;left:514px;top:5px" width="15" height="15"><rect x="1" y="1" width="9" height="8" rx="3" fill="#3c73a8"/><rect x="5" y="6" width="9" height="8" rx="3" fill="#ffd43b"/></svg><div class="bt" style="left:532px;top:3px;width:33px;height:17px;line-height:15px">Logout</div>
<div class="mn"><i style="left:9px">File</i><i style="left:37px">Edit</i><i style="left:66px">View</i><i style="left:98px">Insert</i><i style="left:133px">Cell</i><i style="left:163px">Kernel</i><i style="left:200px">Widgets</i><i style="left:244px">Help</i><div class="bt" style="left:432px;top:1px;width:29px">Trusted</div><i style="left:470px">✎</i><i style="left:484px;border-left:1px solid #ccc;padding-left:3px">Python 3 ○</i></div>
<div class="bt" style="left:36px;width:15px">▣</div><div class="bt" style="left:55px;width:15px">+</div><div class="bt" style="left:73px;width:49px">✂ ⧉ ▤</div><div class="bt" style="left:126px;width:33px">↑ ↓</div><div class="bt" style="left:162px;width:45px">⏭ ■ ↻</div><div class="bt" style="left:210px;width:60px;text-align:left;padding-left:3px">Code<span style="position:absolute;right:2px">▾</span></div><div class="bt" style="left:276px;width:17px">⌨</div>
</div>
<div class="nb">
<div class="ct" style="top:-10px;height:260px"></div>
<div class="cg" style="top:-10px;height:260px"></div><div class="ia" style="top:-10px;height:260px"></div>
<pre style="top:-1px">plt.ylim(<span class="n">0</span>, <span class="n">8</span>)

plt.title(<span class="s">'Cost function'</span>, fontsize<span class="o">=</span><span class="n">17</span>)
plt.xlabel(<span class="s">'X'</span>, fontsize<span class="o">=</span><span class="n">16</span>)
plt.ylabel(<span class="s">'f(x)'</span>, fontsize<span class="o">=</span><span class="n">16</span>)

plt.plot(x_1, f(x_1), color<span class="o">=</span><span class="s">'blue'</span>, linewidth<span class="o">=</span><span class="n">3</span>)

values <span class="o">=</span> np.array(x_list)
plt.scatter(x_list, f(values))

<span class="c"># 2 Chart: Derivative</span>
plt.subplot(<span class="n">1</span>, <span class="n">2</span>, <span class="n">2</span>)

plt.title(<span class="s">'Slope of the cost function'</span>, fontsize<span class="o">=</span><span class="n">17</span>)
plt.xlabel(<span class="s">'X'</span>, fontsize<span class="o">=</span><span class="n">16</span>)
plt.ylabel(<span class="s">'df(x)'</span>, fontsize<span class="o">=</span><span class="n">16</span>)
plt.grid()
plt.xlim(<span class="o">-</span><span class="n">2</span>, <span class="n">3</span>)
plt.ylim(<span class="o">-</span><span class="n">3</span>, <span class="n">6</span>)

plt.plot(x_1, df(x_1), color<span class="o">=</span><span class="s">'skyblue'</span>, linewidth<span class="o">=</span><span class="n">5</span>)

plt.show()</pre>
</div>
</div>

<!-- ============ PANEL 9 ============ -->
<div class="p" style="left:1200px;top:674px">
<div class="mb"><b class="ap"></b><i style="left:25px"><b>Firefox</b></i><i style="left:55px">File</i><i style="left:75px">Edit</i><i style="left:95px">View</i><i style="left:117px">History</i><i style="left:148px">Bookmarks</i><i style="left:190px">Tools</i><i style="left:215px">Window</i><i style="left:248px">Help</i><i style="left:348px">⇢ ▭ ▭ &nbsp;&nbsp; ≋ 100% ▭ &nbsp;▪</i><i style="left:470px">Sat 16:04</i><i style="left:505px"><b>Philipp Muellauer</b></i><i style="left:568px">⌕ &nbsp;≡</i></div>
<div class="tb"><b class="dot" style="left:7px;background:#fc5f57"></b><b class="dot" style="left:16px;background:#fdbc2e"></b><b class="dot" style="left:25px;background:#28c840"></b><div class="tab" style="left:50px;width:105px">MLCourse/<span style="position:absolute;right:8px">×</span></div><div class="tab" style="left:155px;width:105px;background:#2b2a33">03 Gradient Descent<span style="position:absolute;right:8px">×</span></div><i style="position:absolute;left:266px;top:1px;color:#ccc;font-size:10px;font-style:normal">+</i></div>
<div class="ub"><i style="left:4px;top:2px">← → ↻ ⌂</i><div class="uf"><b>localhost</b>:8888/notebooks/ML Projects/03 Gradient Descent.ipynb#<span style="position:absolute;right:6px">··· ♥ ☆</span></div><i style="left:430px;top:2px;font-size:6.5px">◷ − <span style="font-size:5px">120%</span> + ◎ ⚲ ⤢ ⫼ <span style="color:#e33">●</span> ▢ » ≡</i></div>
<div class="jh"><svg style="position:absolute;left:35px;top:4px" width="14" height="16"><path d="M2 6 A6 4 0 0 1 12 6" stroke="#f37726" stroke-width="1.8" fill="none"/><path d="M2 10 A6 4 0 0 0 12 10" stroke="#f37726" stroke-width="1.8" fill="none"/></svg><i style="left:51px;top:2px;font-size:13px;color:#4e4e4e">jupyter</i><i style="left:104px;top:5px;font-size:10.5px;color:#000">03 Gradient Descent</i><i style="left:207px;top:9px;font-size:6.5px;color:#000">Last Checkpoint: 5 hours ago (unsaved changes)</i><svg style="position:absolute;left:514px;top:5px" width="15" height="15"><rect x="1" y="1" width="9" height="8" rx="3" fill="#3c73a8"/><rect x="5" y="6" width="9" height="8" rx="3" fill="#ffd43b"/></svg><div class="bt" style="left:532px;top:3px;width:33px;height:17px;line-height:15px">Logout</div>
<div class="mn"><i style="left:9px">File</i><i style="left:37px">Edit</i><i style="left:66px">View</i><i style="left:98px">Insert</i><i style="left:133px">Cell</i><i style="left:163px">Kernel</i><i style="left:200px">Widgets</i><i style="left:244px">Help</i><div class="bt" style="left:432px;top:1px;width:29px">Trusted</div><i style="left:470px">✎</i><i style="left:484px;border-left:1px solid #ccc;padding-left:3px">Python 3 ○</i></div>
<div class="bt" style="left:36px;width:15px">▣</div><div class="bt" style="left:55px;width:15px">+</div><div class="bt" style="left:73px;width:49px">✂ ⧉ ▤</div><div class="bt" style="left:126px;width:33px">↑ ↓</div><div class="bt" style="left:162px;width:45px">⏭ ■ ↻</div><div class="bt" style="left:210px;width:60px;text-align:left;padding-left:3px">Code<span style="position:absolute;right:2px">▾</span></div><div class="bt" style="left:276px;width:17px">⌨</div>
</div>
<div class="nb">
<div class="ct" style="top:-10px;height:260px"></div>
<div class="cg" style="top:-10px;height:260px"></div><div class="ia" style="top:-10px;height:212px"></div>
<pre style="top:-4px">plt.xlim(<span class="o">-</span><span class="n">2</span>, <span class="n">3</span>)
plt.ylim(<span class="o">-</span><span class="n">3</span>, <span class="n">6</span>)

plt.plot(x_1, df(x_1), color<span class="o">=</span><span class="s">'skyblue'</span>, linewidth<span class="o">=</span><span class="n">5</span>, alpha<span class="o">=</span><span class="n">0.6</span>)
plt.scatter(x_list, slope_list, color<span class="o">=</span><span class="s">'red'</span>, s<span class="o">=</span><span class="n">100</span>, alpha<span class="o">=</span><span class="n">0.5</span>)

<span class="c"># 3 Chart: Derivative (Close Up)</span>
plt.subplot(<span class="n">1</span>, <span class="n">2</span>, <span class="n">2</span>)

plt.title(<span class="s">'Gradient Descent (close up)'</span>, fontsize<span class="o">=</span><span class="n">17</span>)
plt.xlabel(<span class="s">'X'</span>, fontsize<span class="o">=</span><span class="n">16</span>)
plt.ylabel(<span class="s">'df(x)'</span>, fontsize<span class="o">=</span><span class="n">16</span>)
plt.grid()
plt.xlim(<span class="o">-</span><span class="n">2</span>, <span class="n">3</span>)
plt.ylim(<span class="o">-</span><span class="n">3</span>, <span class="n">6</span>)

plt.plot(x_1, df(x_1), color<span class="o">=</span><span class="s">'skyblue'</span>, linewidth<span class="o">=</span><span class="n">5</span>, alpha<span class="o">=</span><span class="n">0.6</span>)
plt.scatter(x_list, slope_list, color<span class="o">=</span><span class="s">'red'</span>, s<span class="o">=</span><span class="n">100</span>, alpha<span class="o">=</span><span class="n">0.5</span>)


plt.show()</pre>
<div style="position:absolute;left:160px;top:205px;font-size:8.5px">Cost function</div>
<div style="position:absolute;left:389px;top:205px;font-size:8.5px">Slope of the cost function</div>
<svg style="position:absolute;left:0;top:216px" width="600" height="30"><rect x="121" y="0" width="180" height="30" fill="#fff" stroke="#888"/><path d="M270 30 L280 2" stroke="#1a1aa0" stroke-width="1.5"/><rect x="349" y="0" width="190" height="30" fill="#fff" stroke="#888"/><path d="M480 22 L520 0" stroke="#87ceeb" stroke-width="2.5"/><circle cx="503" cy="10" r="3" fill="#f66" opacity=".6"/></svg>
</div>
</div>

</body></html>
